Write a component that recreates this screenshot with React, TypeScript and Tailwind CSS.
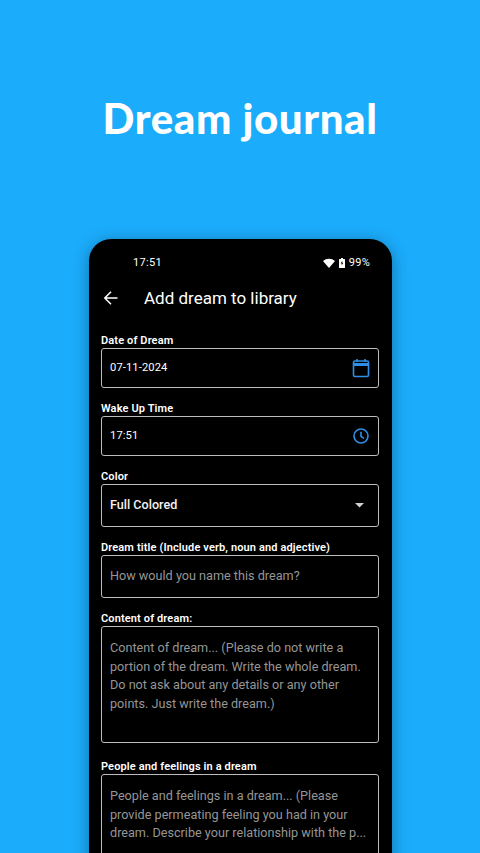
import React from "react";

const roboto = "[font-family:Roboto,'Liberation_Sans',sans-serif]";

function Label({ children, className = "" }: { children: React.ReactNode; className?: string }) {
  return <div className={`h-[15px] text-[11px] leading-[15px] font-semibold text-white tracking-[0.13px] whitespace-nowrap ${className}`}>{children}</div>;
}

function Box({ h, children, className = "" }: { h: string; children: React.ReactNode; className?: string }) {
  return <div className={`${h} rounded-[3px] border border-[#bdbdbd] pl-[8px] pr-[9px] flex whitespace-nowrap ${className}`}>{children}</div>;
}

export default function App() {
  return (
    <div className={`w-[480px] h-[853px] overflow-hidden bg-[#1bacfb] flex flex-col items-center ${roboto}`}>
      <h1 className="mt-[92px] h-[52px] text-[42px] leading-[52px] font-black tracking-[0.6px] text-white [font-family:Lato,sans-serif] whitespace-nowrap">
        Dream journal
      </h1>
      <div className="mt-[95px] ml-[1px] w-[303px] grow rounded-t-[22px] bg-black shadow-[0_3px_16px_rgba(0,0,0,0.35)] pl-[12px] pr-[13px]">
        <div className="h-[46px] pt-[17px] pl-[32px] pr-[9px] flex items-start justify-between text-[11px] leading-[14px] text-white tracking-[0.3px]">
          <span>17:51</span>
          <span className="flex items-center h-[14px]">
            <svg width="12" height="10" viewBox="0 0 12 10" className="mr-[4px]"><path d="M0 3 A9 9 0 0 1 12 3 L6 10 Z" fill="#fff" /></svg>
            <svg width="6" height="10" viewBox="0 0 6 10" className="mr-[4px]"><path d="M2 0h2v1h1.500a.5.5 0 0 1 .5.5V9.500a.5.5 0 0 1-.5.5H.5a.5.5 0 0 1-.5-.5V1.500a.5.5 0 0 1 .5-.5H2z" fill="#fff" /><path d="M3.300 2.800 1.700 5.500h1.100L2.600 7.600 4.300 4.800H3.200z" fill="#000" /></svg>
            <span>99%</span>
          </span>
        </div>
        <div className="h-[26px] flex items-center text-white">
          <svg width="16" height="16" viewBox="0 0 16 16" fill="none" stroke="#fff" strokeWidth="1.500" className="ml-[2px]">
            <path d="M14.500 8H2M8 1.800 1.800 8 8 14.200" />
          </svg>
          <span className="ml-[25px] text-[17px] leading-[26px]">Add dream to library</span>
        </div>
        <div className="pt-[22px] flex flex-col">
          <Label>Date of Dream</Label>
          <Box h="h-[40px] mb-[13px]" className="items-center justify-between text-[11.200px] text-white">
            <span className="tracking-[0.1px] pt-[1px]">07-11-2024</span>
            <svg width="18" height="20" viewBox="0 0 18 20" fill="none" stroke="#2f8fe8" strokeWidth="1.600" className="mr-[-1px]">
              <rect x="1.500" y="3" width="15" height="15.500" rx="1.500" />
              <path d="M1.500 6.500h15" strokeWidth="3" />
              <path d="M5 1v3M13 1v3" />
            </svg>
          </Box>
          <Label>Wake Up Time</Label>
          <Box h="h-[40px] mb-[13px]" className="items-center justify-between text-[11.200px] text-white">
            <span className="tracking-[0.1px] pt-[1px]">17:51</span>
            <svg width="18" height="18" viewBox="0 0 18 18" fill="none" stroke="#2f8fe8" strokeWidth="1.600" className="mr-[-1px]">
              <circle cx="9" cy="9" r="7" />
              <path d="M9 4.800V9.300l3 2" />
            </svg>
          </Box>
          <Label>Color</Label>
          <Box h="h-[43px] mb-[13px]" className="items-center justify-between text-[12.600px] text-[#f2f2f2] font-medium">
            <span>Full Colored</span>
            <svg width="10" height="5" viewBox="0 0 10 5" className="mr-[4px]"><path d="M0 0h9L4.500 4.500z" fill="#d0d0d0" /></svg>
          </Box>
          <Label>Dream title (Include verb, noun and adjective)</Label>
          <Box h="h-[43px] mb-[13px]" className="items-center text-[12.650px] text-[#969696]">
            How would you name this dream?
          </Box>
          <Label>Content of dream:</Label>
          <Box h="h-[117px] mb-[16px]" className="block pt-[12px] text-[12.650px] leading-[18.500px] text-[#969696]">
            Content of dream... (Please do not write a
            <br />
            portion of the dream. Write the whole dream.
            <br />
            Do not ask about any details or any other
            <br />
            points. Just write the dream.)
          </Box>
          <Label>People and feelings in a dream</Label>
          <Box h="h-[117px]" className="block pt-[12px] text-[12.650px] leading-[18.500px] text-[#969696]">
            People and feelings in a dream... (Please
            <br />
            provide permeating feeling you had in your
            <br />
            dream. Describe your relationship with the p...
          </Box>
        </div>
      </div>
    </div>
  );
}
